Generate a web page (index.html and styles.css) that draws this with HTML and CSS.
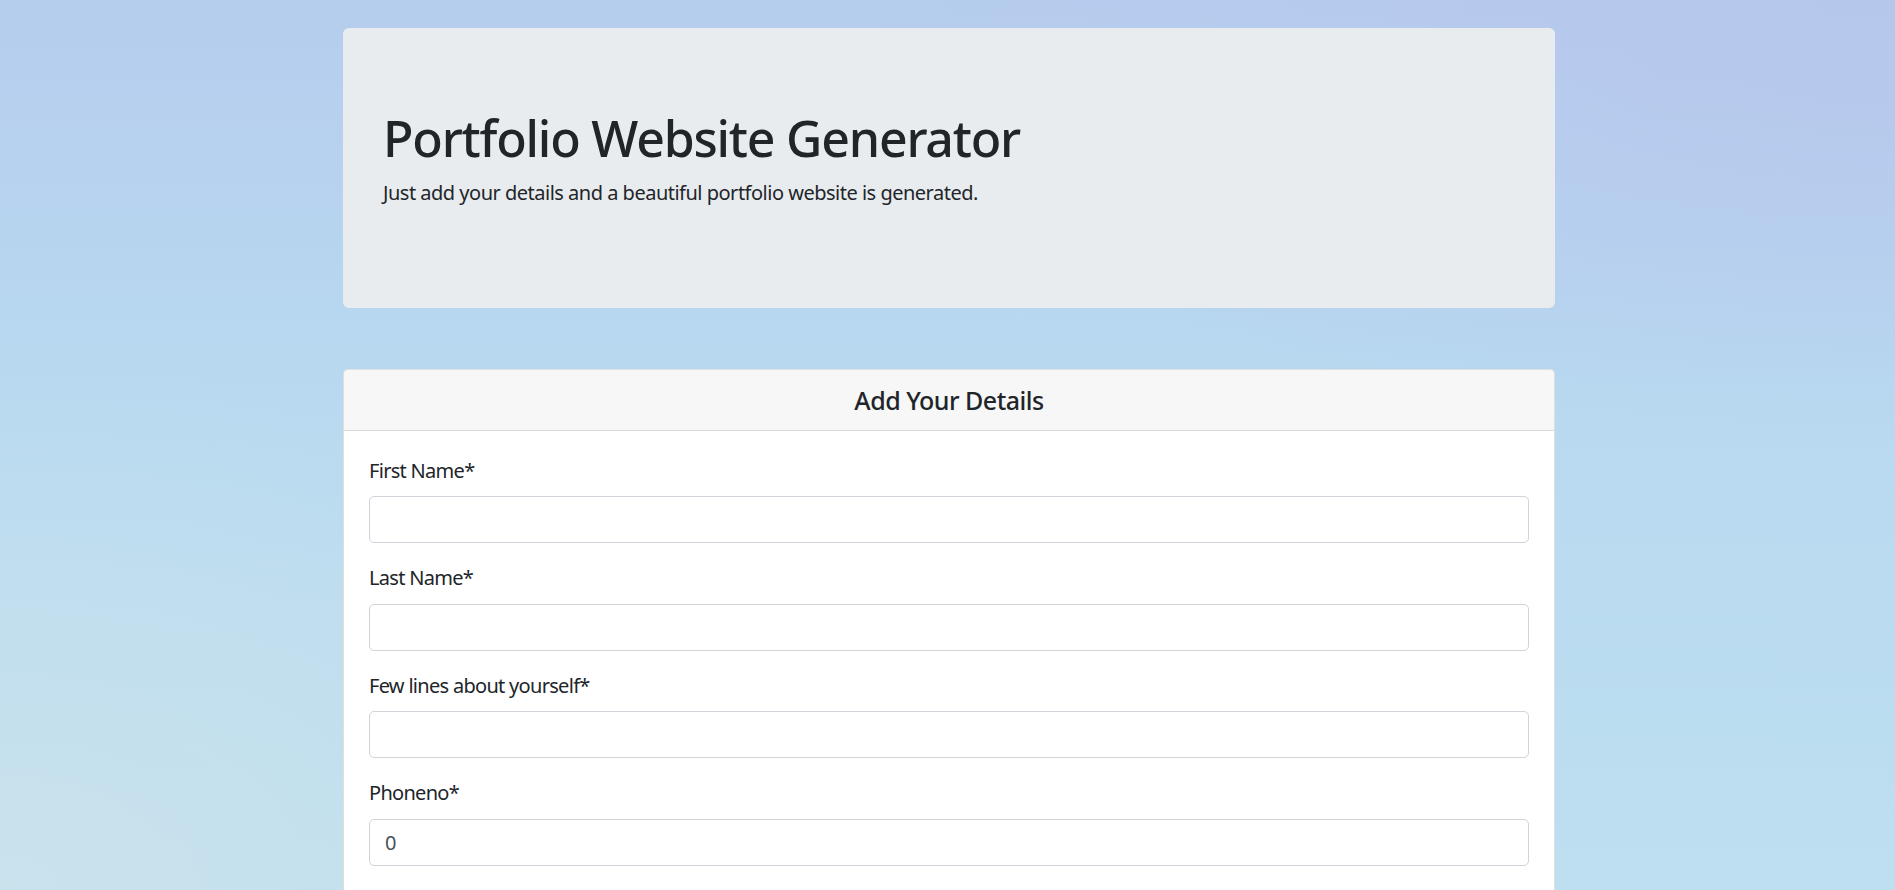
FILE: index.html
```html
<!DOCTYPE html>
<html lang="en">
<head>
<meta charset="utf-8">
<title>Portfolio Website Generator</title>
<link rel="stylesheet" href="styles.css">
</head>
<body>
<div class="page">
  <header class="jumbotron">
    <h1 class="jumbo-title">Portfolio Website Generator</h1>
    <p class="jumbo-text">Just add your details and a beautiful portfolio website is generated.</p>
  </header>

  <section class="card">
    <div class="card-header">
      <h5 class="card-title">Add Your Details</h5>
    </div>
    <form class="card-body">
      <div class="form-group">
        <label class="form-label" for="fname">First Name*</label>
        <input class="form-control" id="fname" type="text">
      </div>
      <div class="form-group">
        <label class="form-label" for="lname">Last Name*</label>
        <input class="form-control" id="lname" type="text">
      </div>
      <div class="form-group">
        <label class="form-label" for="about">Few lines about yourself*</label>
        <input class="form-control" id="about" type="text">
      </div>
      <div class="form-group">
        <label class="form-label" for="phone">Phoneno*</label>
        <input class="form-control" id="phone" type="number" value="0">
      </div>
    </form>
  </section>
</div>
</body>
</html>
```

FILE: styles.css
```css
html {
  font-size: 20px;
  scrollbar-width: none;
  background-color: #b8d8f0;
  background-image:
    radial-gradient(ellipse 55% 50% at 100% 0%, rgba(182, 198, 236, 0.85) 0%, rgba(182, 198, 236, 0) 100%),
    radial-gradient(ellipse 45% 60% at 0% 100%, rgba(202, 226, 236, 0.95) 0%, rgba(202, 226, 236, 0) 100%),
    linear-gradient(180deg, #b6cdee 0%, #b8d9f0 45%, #bddff0 100%);
  background-attachment: fixed;
  min-height: 100%;
}

html::-webkit-scrollbar {
  display: none;
}

body {
  margin: 0;
  font-family: "Noto Sans", "Open Sans", "DejaVu Sans", sans-serif;
  font-size: 1rem;
  line-height: 1.5;
  color: #212529;
}

.page {
  width: 1212px;
  margin: 0 auto;
  padding-top: 28px;
  padding-left: 3px;
}

.jumbotron {
  background: #e9ecef;
  border-radius: 6px;
  padding: 80px 40px;
  margin-bottom: 61px;
}

.jumbo-title {
  margin: 0 0 10px;
  font-size: 50px;
  font-weight: 500;
  line-height: 1.2;
  letter-spacing: -1.2px;
}

.jumbo-text {
  margin: 0 0 20px;
  font-size: 20px;
  letter-spacing: -0.5px;
}

.card {
  background: #fff;
  border: 1px solid rgba(0, 0, 0, 0.125);
  border-radius: 5px;
}

.card-header {
  background: rgba(0, 0, 0, 0.03);
  border-bottom: 1px solid rgba(0, 0, 0, 0.125);
  padding: 15px 25px;
  border-radius: 4px 4px 0 0;
}

.card-title {
  margin: 0;
  font-size: 25px;
  font-weight: 500;
  line-height: 1.2;
  text-align: center;
  letter-spacing: -0.5px;
}

.card-body {
  padding: 25px;
}

.form-group {
  margin-bottom: 20px;
}

.form-label {
  display: block;
  height: 30px;
  margin-bottom: 10.4px;
  letter-spacing: -0.7px;
}

.form-control {
  display: block;
  box-sizing: border-box;
  width: 100%;
  height: 47px;
  padding: 7.5px 15px;
  font-family: inherit;
  font-size: 20px;
  line-height: 1.5;
  color: #495057;
  background: #fff;
  border: 1px solid #ced4da;
  border-radius: 5px;
  -moz-appearance: textfield;
}

.form-control::-webkit-outer-spin-button,
.form-control::-webkit-inner-spin-button {
  -webkit-appearance: none;
  margin: 0;
}
```
